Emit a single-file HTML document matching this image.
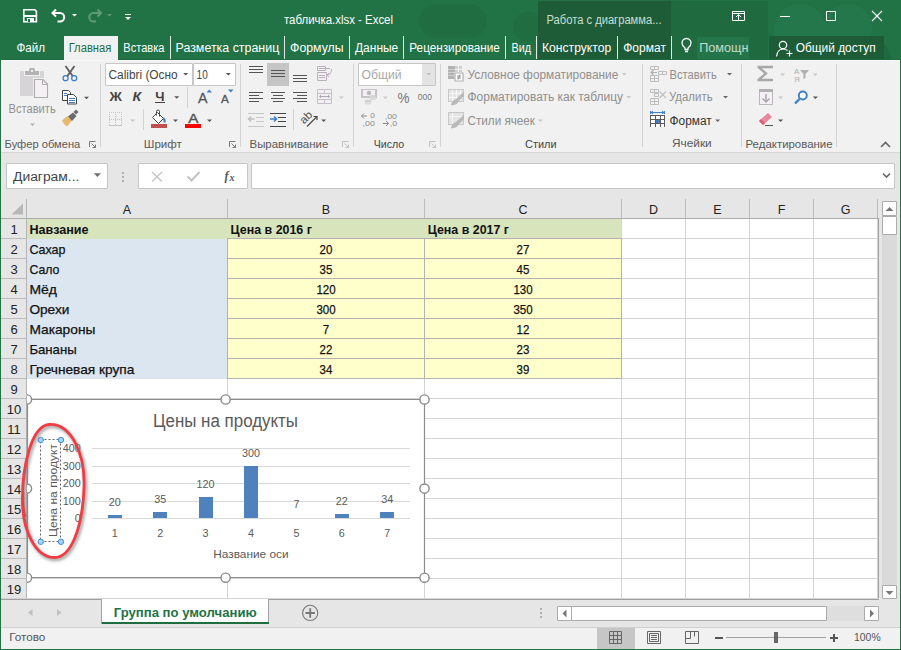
<!DOCTYPE html><html><head><meta charset="utf-8"><style>html,body{margin:0;padding:0;overflow:hidden;background:#fff}svg{display:block}text{white-space:pre}</style></head><body><svg width="901" height="650" viewBox="0 0 901 650"><rect x="0" y="0" width="901" height="650" fill="#ffffff" shape-rendering="crispEdges" />
<rect x="0" y="0" width="901" height="60" fill="#217346" shape-rendering="crispEdges" />
<rect x="419" y="4" width="68" height="34" fill="#206d42" shape-rendering="crispEdges" rx="17"/>
<circle cx="528" cy="27" r="15" fill="#206d42"/>
<g opacity="0.35"><circle cx="800" cy="30" r="26" fill="#2a8052"/><circle cx="848" cy="28" r="24" fill="#2a8052"/><circle cx="870" cy="62" r="22" fill="#1a5c37"/></g>
<rect x="671" y="1" width="97" height="59" fill="#1f6a3f" shape-rendering="crispEdges" />
<rect x="538" y="1" width="133" height="59" fill="#1e5b37" shape-rendering="crispEdges" />
<text x="546.5" y="24" font-size="12" fill="#c9dfcf" font-family="Liberation Sans" textLength="115" lengthAdjust="spacingAndGlyphs" >Работа с диаграмма...</text>
<path d="M23.8,9.8 h11 l1.6,1.6 v10.4 h-12.6 z" fill="none" stroke="#fff" stroke-width="1.6" />
<rect x="24" y="15" width="12" height="2" fill="#fff" shape-rendering="crispEdges" />
<rect x="27" y="18" width="7" height="4" fill="#fff" shape-rendering="crispEdges" />
<rect x="28" y="19" width="2" height="3" fill="#217346" shape-rendering="crispEdges" />
<path d="M56,9.5 l-3.5,3.5 l3.5,3.5 M53,13 h7 a4.2,4.2 0 0 1 0,8.4 h-2.5" fill="none" stroke="#fff" stroke-width="2" />
<path d="M72.0,14 L77.0,14 L74.5,16.5 Z" fill="#fff" />
<path d="M97.5,9.5 l3.5,3.5 l-3.5,3.5 M100.5,13 h-7 a4.2,4.2 0 0 0 0,8.4 h2.5" fill="none" stroke="#5e9c78" stroke-width="2" />
<path d="M107.0,14 L112.0,14 L109.5,16.5 Z" fill="#5e9c78" />
<rect x="125" y="14" width="6" height="1" fill="#fff" shape-rendering="crispEdges" />
<path d="M125.0,17 L131.0,17 L128,20.0 Z" fill="#fff" />
<text x="284" y="24" font-size="12.3" fill="#ffffff" font-family="Liberation Sans" textLength="109" lengthAdjust="spacingAndGlyphs" >табличка.xlsx - Excel</text>
<path d="M732.5,11.5 h12 v9 h-12 z M732.5,13.5 h12" fill="none" stroke="#fff" stroke-width="1" />
<path d="M738.5,20 v-5 M736,17 l2.5,-2.5 l2.5,2.5" fill="none" stroke="#fff" stroke-width="1" />
<rect x="780" y="16" width="10" height="1" fill="#fff" shape-rendering="crispEdges" />
<path d="M826.5,11.5 h9 v9 h-9 z" fill="none" stroke="#fff" stroke-width="1" />
<path d="M872,11 L882,21 M882,11 L872,21" fill="none" stroke="#fff" stroke-width="1.1" />
<rect x="64" y="36" width="54" height="24" fill="#f1f1f1" shape-rendering="crispEdges" />
<text x="16.5" y="51.8" font-size="12.5" fill="#fff" font-family="Liberation Sans" textLength="28.5" lengthAdjust="spacingAndGlyphs" >Файл</text>
<text x="68.7" y="51.8" font-size="12.5" fill="#1e6e40" font-family="Liberation Sans" textLength="42.6" lengthAdjust="spacingAndGlyphs" >Главная</text>
<text x="123.3" y="51.8" font-size="12.5" fill="#fff" font-family="Liberation Sans" textLength="41.1" lengthAdjust="spacingAndGlyphs" >Вставка</text>
<text x="175.5" y="51.8" font-size="12.5" fill="#fff" font-family="Liberation Sans" textLength="103.8" lengthAdjust="spacingAndGlyphs" >Разметка страниц</text>
<text x="290.1" y="51.8" font-size="12.5" fill="#fff" font-family="Liberation Sans" textLength="53.4" lengthAdjust="spacingAndGlyphs" >Формулы</text>
<text x="355" y="51.8" font-size="12.5" fill="#fff" font-family="Liberation Sans" textLength="43.3" lengthAdjust="spacingAndGlyphs" >Данные</text>
<text x="409.3" y="51.8" font-size="12.5" fill="#fff" font-family="Liberation Sans" textLength="90.6" lengthAdjust="spacingAndGlyphs" >Рецензирование</text>
<text x="511.5" y="51.8" font-size="12.5" fill="#fff" font-family="Liberation Sans" textLength="19.5" lengthAdjust="spacingAndGlyphs" >Вид</text>
<text x="542" y="51.8" font-size="12.5" fill="#fff" font-family="Liberation Sans" textLength="69.2" lengthAdjust="spacingAndGlyphs" >Конструктор</text>
<text x="623.2" y="51.8" font-size="12.5" fill="#fff" font-family="Liberation Sans" textLength="42.7" lengthAdjust="spacingAndGlyphs" >Формат</text>
<rect x="170" y="36" width="1" height="23" fill="#dfeae3" shape-rendering="crispEdges" />
<rect x="284" y="36" width="1" height="23" fill="#dfeae3" shape-rendering="crispEdges" />
<rect x="349" y="36" width="1" height="23" fill="#dfeae3" shape-rendering="crispEdges" />
<rect x="403" y="36" width="1" height="23" fill="#dfeae3" shape-rendering="crispEdges" />
<rect x="505" y="36" width="1" height="23" fill="#dfeae3" shape-rendering="crispEdges" />
<rect x="536" y="36" width="1" height="23" fill="#dfeae3" shape-rendering="crispEdges" />
<rect x="617" y="36" width="1" height="23" fill="#dfeae3" shape-rendering="crispEdges" />
<rect x="671" y="36" width="1" height="23" fill="#dfeae3" shape-rendering="crispEdges" />
<path d="M685,49.5 v-1.5 c-2,-1.5 -3,-3 -3,-5 a4.5,4.5 0 0 1 9,0 c0,2 -1,3.5 -3,5 v1.5 z M685,51.5 h3" fill="none" stroke="#fff" stroke-width="1.3" />
<rect x="697" y="37" width="52" height="22" fill="#247549" shape-rendering="crispEdges" />
<text x="699.2" y="51.8" font-size="12.5" fill="#c6dccd" font-family="Liberation Sans" textLength="49.2" lengthAdjust="spacingAndGlyphs" >Помощн</text>
<rect x="769" y="36" width="115" height="23" fill="#1d5c37" shape-rendering="crispEdges" />
<circle cx="783" cy="45" r="3.7" fill="none" stroke="#fff" stroke-width="1.2"/>
<path d="M776.5,56.5 C777,51.5 780,49 783,49 C785,49 786.5,49.6 787.5,50.5 M789.5,50.5 v6 M786.5,53.5 h6" fill="none" stroke="#fff" stroke-width="1.2" />
<text x="795.7" y="51.8" font-size="12.5" fill="#fff" font-family="Liberation Sans" textLength="80" lengthAdjust="spacingAndGlyphs" >Общий доступ</text>
<rect x="1" y="60" width="899" height="92" fill="#f1f1f1" shape-rendering="crispEdges" />
<rect x="1" y="59" width="63" height="1" fill="#1e6b40" shape-rendering="crispEdges" />
<rect x="118" y="59" width="782" height="1" fill="#1e6b40" shape-rendering="crispEdges" />
<rect x="1" y="60" width="899" height="1" fill="#f7f7f7" shape-rendering="crispEdges" />
<rect x="1" y="60" width="1" height="92" fill="#f7f7f7" shape-rendering="crispEdges" />
<rect x="1" y="152" width="899" height="1" fill="#d5d5d5" shape-rendering="crispEdges" />
<rect x="100" y="64" width="1" height="83" fill="#d2d2d2" shape-rendering="crispEdges" />
<rect x="240" y="64" width="1" height="83" fill="#d2d2d2" shape-rendering="crispEdges" />
<rect x="353" y="64" width="1" height="83" fill="#d2d2d2" shape-rendering="crispEdges" />
<rect x="440" y="64" width="1" height="83" fill="#d2d2d2" shape-rendering="crispEdges" />
<rect x="642" y="64" width="1" height="83" fill="#d2d2d2" shape-rendering="crispEdges" />
<rect x="741" y="64" width="1" height="83" fill="#d2d2d2" shape-rendering="crispEdges" />
<rect x="836" y="64" width="1" height="83" fill="#d2d2d2" shape-rendering="crispEdges" />
<rect x="20" y="71" width="24" height="25" fill="#d6d4d6" shape-rendering="crispEdges" />
<rect x="24" y="70" width="16" height="6" fill="#f1f1f1" shape-rendering="crispEdges" />
<rect x="25" y="71" width="14" height="4" fill="#b3b3b3" shape-rendering="crispEdges" />
<path d="M29,72 v-2.5 a1.5,1.5 0 0 1 1.5,-1.5 h3 a1.5,1.5 0 0 1 1.5,1.5 v2.5 z" fill="#b3b3b3" />
<rect x="31" y="70" width="2" height="2" fill="#f1f1f1" shape-rendering="crispEdges" />
<rect x="33" y="78" width="16" height="21" fill="#f1f1f1" shape-rendering="crispEdges" />
<path d="M34.5,79.5 h8.5 l4.5,4.5 v13.5 h-13 z" fill="#f4f0f4" stroke="#acacac" stroke-width="1.1" />
<path d="M42.5,79.5 v5 h5" fill="none" stroke="#acacac" stroke-width="1" />
<text x="8.5" y="112.6" font-size="12" fill="#919191" font-family="Liberation Sans" textLength="47.2" lengthAdjust="spacingAndGlyphs" >Вставить</text>
<path d="M30.0,123.5 L35.0,123.5 L32.5,126.0 Z" fill="#b0b0b0" />
<path d="M65.5,66 l7.5,10.5 M74.5,66 l-7.5,10.5" fill="none" stroke="#5f5f5f" stroke-width="1.9" />
<circle cx="65.6" cy="78.2" r="2.5" fill="#f1f1f1" stroke="#3f7fc4" stroke-width="1.3"/>
<circle cx="74.2" cy="78.2" r="2.5" fill="#f1f1f1" stroke="#3f7fc4" stroke-width="1.3"/>
<path d="M62.5,90.5 h6 l2,2 v8 h-8 z" fill="#fff" stroke="#444" stroke-width="1" />
<path d="M67.5,94.5 h6 l3,3 v6.5 h-9 z" fill="#fff" stroke="#444" stroke-width="1" />
<rect x="64" y="93" width="3" height="1" fill="#3f7fc4" shape-rendering="crispEdges" />
<rect x="64" y="95" width="3" height="1" fill="#3f7fc4" shape-rendering="crispEdges" />
<rect x="69" y="98" width="6" height="1" fill="#3f7fc4" shape-rendering="crispEdges" />
<rect x="69" y="100" width="6" height="1" fill="#3f7fc4" shape-rendering="crispEdges" />
<rect x="69" y="102" width="6" height="1" fill="#3f7fc4" shape-rendering="crispEdges" />
<path d="M84.0,96.8 L89.0,96.8 L86.5,99.3 Z" fill="#555" />
<path d="M62,120.5 L67.5,116 L72,120.5 L67,126.5 Q63.5,124.5 62,120.5 z" fill="#e6b96e" />
<path d="M68,116.5 L73,112.5 L76.5,116 L72,121 z" fill="#6a6a6a" />
<path d="M73.5,112 L76,109.5 L78.5,112 L76,114.5 z" fill="#6a6a6a" />
<text x="4.6" y="148" font-size="11" fill="#595959" font-family="Liberation Sans" textLength="75.7" lengthAdjust="spacingAndGlyphs" >Буфер обмена</text>
<path d="M89.5,147 v-5.5 h6" fill="none" stroke="#7a7a7a" stroke-width="1" />
<path d="M91.5,143.5 l4,4 M95.5,144.5 v3 h-3" fill="none" stroke="#7a7a7a" stroke-width="1" />
<rect x="105" y="63" width="88" height="23" fill="#fff" shape-rendering="crispEdges" />
<path d="M105.5,63.5 h87 v22 h-87 z" fill="none" stroke="#c6c6c6" stroke-width="1" />
<rect x="193" y="63" width="43" height="23" fill="#fff" shape-rendering="crispEdges" />
<path d="M193.5,63.5 h42 v22 h-42 z" fill="none" stroke="#c6c6c6" stroke-width="1" />
<text x="108.5" y="79" font-size="12" fill="#444444" font-family="Liberation Sans" textLength="69.2" lengthAdjust="spacingAndGlyphs" >Calibri (Осно</text>
<path d="M183.2,73 L188.2,73 L185.7,75.5 Z" fill="#555" />
<text x="196.6" y="79" font-size="12" fill="#444444" font-family="Liberation Sans" textLength="11.1" lengthAdjust="spacingAndGlyphs" >10</text>
<path d="M225.9,73 L230.9,73 L228.4,75.5 Z" fill="#555" />
<text x="109.6" y="100.7" font-size="12.5" fill="#444444" font-family="Liberation Sans" textLength="12.4" lengthAdjust="spacingAndGlyphs" font-weight="bold" >Ж</text>
<text x="132.5" y="100.7" font-size="12.5" fill="#444444" font-family="Liberation Sans" textLength="8.7" lengthAdjust="spacingAndGlyphs" font-weight="bold" font-style="italic">К</text>
<text x="155.2" y="100.7" font-size="12.5" fill="#444444" font-family="Liberation Sans" textLength="9.3" lengthAdjust="spacingAndGlyphs" font-weight="bold" >Ч</text>
<rect x="155" y="102" width="10" height="1" fill="#444444" shape-rendering="crispEdges" />
<path d="M174.2,96.2 L179.2,96.2 L176.7,98.7 Z" fill="#555" />
<rect x="187" y="87" width="1" height="21" fill="#d2d2d2" shape-rendering="crispEdges" />
<text x="198" y="103" font-size="14" fill="#555" font-family="Liberation Sans" textLength="9.5" lengthAdjust="spacingAndGlyphs" stroke="#555" stroke-width="0.3">A</text>
<path d="M206.5,92.5 l2.75,-3 l2.75,3 z" fill="#3f7fc4" />
<text x="221" y="103" font-size="11" fill="#555" font-family="Liberation Sans" textLength="7.8" lengthAdjust="spacingAndGlyphs" stroke="#555" stroke-width="0.3">A</text>
<path d="M228,89.5 h5.5 l-2.75,3 z" fill="#3f7fc4" />
<g fill="#c9c0cf"><rect x="109" y="112" width="1" height="1"/><rect x="109" y="119" width="1" height="1"/><rect x="111" y="112" width="1" height="1"/><rect x="111" y="119" width="1" height="1"/><rect x="113" y="112" width="1" height="1"/><rect x="113" y="119" width="1" height="1"/><rect x="115" y="112" width="1" height="1"/><rect x="115" y="119" width="1" height="1"/><rect x="117" y="112" width="1" height="1"/><rect x="117" y="119" width="1" height="1"/><rect x="119" y="112" width="1" height="1"/><rect x="119" y="119" width="1" height="1"/><rect x="121" y="112" width="1" height="1"/><rect x="121" y="119" width="1" height="1"/><rect x="109" y="112" width="1" height="1"/><rect x="115" y="112" width="1" height="1"/><rect x="121" y="112" width="1" height="1"/><rect x="109" y="114" width="1" height="1"/><rect x="115" y="114" width="1" height="1"/><rect x="121" y="114" width="1" height="1"/><rect x="109" y="116" width="1" height="1"/><rect x="115" y="116" width="1" height="1"/><rect x="121" y="116" width="1" height="1"/><rect x="109" y="118" width="1" height="1"/><rect x="115" y="118" width="1" height="1"/><rect x="121" y="118" width="1" height="1"/><rect x="109" y="120" width="1" height="1"/><rect x="115" y="120" width="1" height="1"/><rect x="121" y="120" width="1" height="1"/><rect x="109" y="122" width="1" height="1"/><rect x="115" y="122" width="1" height="1"/><rect x="121" y="122" width="1" height="1"/><rect x="109" y="124" width="1" height="1"/><rect x="115" y="124" width="1" height="1"/><rect x="121" y="124" width="1" height="1"/></g>
<rect x="109" y="125" width="13" height="1" fill="#c6c6c6" shape-rendering="crispEdges" />
<path d="M130.2,119.5 L135.2,119.5 L132.7,122.0 Z" fill="#c8c8c8" />
<rect x="143" y="109" width="1" height="21" fill="#d2d2d2" shape-rendering="crispEdges" />
<path d="M152.5,117.5 l5,-5 l6,6 l-5,5 z" fill="#fff" stroke="#444" stroke-width="1" />
<path d="M163,118 c1.5,1 2,3 1.2,4.5" fill="none" stroke="#3f7fc4" stroke-width="2" />
<path d="M156.5,115.5 v-4 a1.5,1.5 0 0 1 3,0 v5" fill="none" stroke="#444" stroke-width="1" />
<rect x="151" y="124" width="16" height="4" fill="#c0504d" shape-rendering="crispEdges" />
<path d="M173.0,119.5 L178.0,119.5 L175.5,122.0 Z" fill="#555" />
<text x="188.3" y="123.3" font-size="13.5" fill="#555" font-family="Liberation Sans" textLength="10.2" lengthAdjust="spacingAndGlyphs" stroke="#555" stroke-width="0.4">A</text>
<rect x="185" y="124" width="16" height="4" fill="#ff0000" shape-rendering="crispEdges" />
<path d="M207.0,119.5 L212.0,119.5 L209.5,122.0 Z" fill="#555" />
<text x="143.8" y="148" font-size="11" fill="#595959" font-family="Liberation Sans" textLength="38.1" lengthAdjust="spacingAndGlyphs" >Шрифт</text>
<path d="M229.5,147 v-5.5 h6" fill="none" stroke="#7a7a7a" stroke-width="1" />
<path d="M231.5,143.5 l4,4 M235.5,144.5 v3 h-3" fill="none" stroke="#7a7a7a" stroke-width="1" />
<rect x="249" y="66" width="14" height="1" fill="#555" shape-rendering="crispEdges" />
<rect x="249" y="69" width="14" height="1" fill="#555" shape-rendering="crispEdges" />
<rect x="249" y="72" width="14" height="1" fill="#555" shape-rendering="crispEdges" />
<rect x="267" y="63" width="22" height="23" fill="#c5c5c5" shape-rendering="crispEdges" />
<rect x="271" y="70" width="14" height="1" fill="#555" shape-rendering="crispEdges" />
<rect x="271" y="73" width="14" height="1" fill="#555" shape-rendering="crispEdges" />
<rect x="271" y="76" width="14" height="1" fill="#555" shape-rendering="crispEdges" />
<rect x="293" y="75" width="14" height="1" fill="#555" shape-rendering="crispEdges" />
<rect x="293" y="78" width="14" height="1" fill="#555" shape-rendering="crispEdges" />
<rect x="293" y="81" width="14" height="1" fill="#555" shape-rendering="crispEdges" />
<path d="M317.5,66.5 h8 v4 h-8 z M317.5,72.5 h9 v8 h-9 z M319,68.5 h11 M319,75.5 h6 M319,77.5 h6" fill="none" stroke="#b9b0bc" stroke-width="1" />
<path d="M331.5,69 Q331.5,75 327,75 M329,73 l-2,2 l2,2" fill="none" stroke="#b9b0bc" stroke-width="1" />
<rect x="249" y="92" width="14" height="1" fill="#555" shape-rendering="crispEdges" />
<rect x="249" y="95" width="10" height="1" fill="#555" shape-rendering="crispEdges" />
<rect x="249" y="98" width="14" height="1" fill="#555" shape-rendering="crispEdges" />
<rect x="249" y="101" width="10" height="1" fill="#555" shape-rendering="crispEdges" />
<rect x="271" y="92" width="14" height="1" fill="#555" shape-rendering="crispEdges" />
<rect x="271" y="98" width="14" height="1" fill="#555" shape-rendering="crispEdges" />
<rect x="273" y="95" width="10" height="1" fill="#555" shape-rendering="crispEdges" />
<rect x="273" y="101" width="10" height="1" fill="#555" shape-rendering="crispEdges" />
<rect x="293" y="92" width="14" height="1" fill="#555" shape-rendering="crispEdges" />
<rect x="293" y="98" width="14" height="1" fill="#555" shape-rendering="crispEdges" />
<rect x="297" y="95" width="10" height="1" fill="#555" shape-rendering="crispEdges" />
<rect x="297" y="101" width="10" height="1" fill="#555" shape-rendering="crispEdges" />
<path d="M317.5,89.5 h14 v14 h-14 z M317.5,93.5 h14 M317.5,99.5 h14 M324.5,89.5 v4 M324.5,99.5 v4" fill="none" stroke="#c8bccd" stroke-width="1" />
<path d="M320,96.5 h9 M321,95 l-1.5,1.5 l1.5,1.5 M328,95 l1.5,1.5 l-1.5,1.5" fill="none" stroke="#b0a6b6" stroke-width="1" />
<path d="M338.8,96.5 L343.8,96.5 L341.3,99.0 Z" fill="#c8c8c8" />
<rect x="248" y="113" width="16" height="1" fill="#c8c8c8" shape-rendering="crispEdges" />
<rect x="248" y="126" width="16" height="1" fill="#c8c8c8" shape-rendering="crispEdges" />
<rect x="256" y="117" width="8" height="1" fill="#c8c8c8" shape-rendering="crispEdges" />
<rect x="256" y="121" width="8" height="1" fill="#c8c8c8" shape-rendering="crispEdges" />
<path d="M248.5,119 h6 M251,116.5 l-2.5,2.5 l2.5,2.5" fill="none" stroke="#c0c0c0" stroke-width="1.5" />
<rect x="270" y="113" width="16" height="1" fill="#444" shape-rendering="crispEdges" />
<rect x="270" y="126" width="16" height="1" fill="#444" shape-rendering="crispEdges" />
<rect x="278" y="117" width="8" height="1" fill="#444" shape-rendering="crispEdges" />
<rect x="278" y="121" width="8" height="1" fill="#444" shape-rendering="crispEdges" />
<path d="M270,119 h6 M274,116.5 l2.5,2.5 l-2.5,2.5" fill="none" stroke="#3f7fc4" stroke-width="1.6" />
<rect x="293" y="109" width="1" height="21" fill="#d2d2d2" shape-rendering="crispEdges" />
<text x="0" y="0" font-size="11" fill="#4a4a4a" font-family="Liberation Sans" textLength="13" lengthAdjust="spacingAndGlyphs" transform="translate(304,124.5) rotate(-45)">ab</text>
<path d="M307,126.5 L317,116.5 M313.5,116.5 h3.5 v3.5" fill="none" stroke="#4a4a4a" stroke-width="1.2" />
<path d="M321.2,119.5 L326.2,119.5 L323.7,122.0 Z" fill="#555" />
<text x="249.5" y="148" font-size="11" fill="#595959" font-family="Liberation Sans" textLength="78.8" lengthAdjust="spacingAndGlyphs" >Выравнивание</text>
<path d="M342.5,147 v-5.5 h6" fill="none" stroke="#c0c0c0" stroke-width="1" />
<path d="M344.5,143.5 l4,4 M348.5,144.5 v3 h-3" fill="none" stroke="#c0c0c0" stroke-width="1" />
<rect x="358" y="63" width="78" height="23" fill="#fff" shape-rendering="crispEdges" />
<rect x="422" y="64" width="13" height="21" fill="#e3e3e3" shape-rendering="crispEdges" />
<path d="M358.5,63.5 h77 v22 h-77 z" fill="none" stroke="#c6c6c6" stroke-width="1" />
<text x="361.5" y="78.8" font-size="12" fill="#a8a8a8" font-family="Liberation Sans" textLength="40" lengthAdjust="spacingAndGlyphs" >Общий</text>
<path d="M426.2,73 L431.2,73 L428.7,75.5 Z" fill="#c0c0c0" />
<rect x="361" y="89" width="16" height="9" fill="#c4c4c4" shape-rendering="crispEdges" />
<rect x="363" y="90" width="12" height="6" fill="#f4eff4" shape-rendering="crispEdges" />
<circle cx="369" cy="93" r="2.2" fill="#b8b8b8"/>
<ellipse cx="373" cy="96.5" rx="3.6" ry="1.6" fill="#d2d2d2"/><ellipse cx="373" cy="98.8" rx="3.6" ry="1.3" fill="#dcdcdc"/>
<ellipse cx="368" cy="101" rx="3.6" ry="1.6" fill="#d2d2d2"/><ellipse cx="368" cy="103.3" rx="3.6" ry="1.3" fill="#dcdcdc"/>
<path d="M382.8,96.5 L387.8,96.5 L385.3,99.0 Z" fill="#c8c8c8" />
<text x="397.6" y="102.8" font-size="14" fill="#777" font-family="Liberation Sans" textLength="12" lengthAdjust="spacingAndGlyphs" >%</text>
<text x="417.7" y="100.2" font-size="9.5" fill="#777" font-family="Liberation Sans" textLength="14.2" lengthAdjust="spacingAndGlyphs" >000</text>
<text x="370.3" y="118.4" font-size="7.5" fill="#8a8a8a" font-family="Liberation Sans" textLength="4.6" lengthAdjust="spacingAndGlyphs" >0</text>
<text x="362.6" y="126.3" font-size="7.5" fill="#8a8a8a" font-family="Liberation Sans" textLength="12.2" lengthAdjust="spacingAndGlyphs" >,00</text>
<path d="M361.5,116 h5.5 M364,113.5 l-2.5,2.5 l2.5,2.5" fill="none" stroke="#8a8a8a" stroke-width="1" />
<text x="384.8" y="118.5" font-size="7.5" fill="#8a8a8a" font-family="Liberation Sans" textLength="12.2" lengthAdjust="spacingAndGlyphs" >,00</text>
<text x="389.8" y="126.3" font-size="7.5" fill="#8a8a8a" font-family="Liberation Sans" textLength="7.4" lengthAdjust="spacingAndGlyphs" >,0</text>
<path d="M383,123.5 h5.5 M386,121 l2.5,2.5 l-2.5,2.5" fill="none" stroke="#8a8a8a" stroke-width="1" />
<text x="373.8" y="148" font-size="11" fill="#444" font-family="Liberation Sans" textLength="30.4" lengthAdjust="spacingAndGlyphs" >Число</text>
<path d="M429.5,147 v-5.5 h6" fill="none" stroke="#c0c0c0" stroke-width="1" />
<path d="M431.5,143.5 l4,4 M435.5,144.5 v3 h-3" fill="none" stroke="#c0c0c0" stroke-width="1" />
<rect x="448" y="66" width="14" height="13" fill="#d0d0d0" shape-rendering="crispEdges" />
<rect x="448" y="66" width="7" height="13" fill="#b3b3b3" shape-rendering="crispEdges" />
<rect x="448" y="69" width="7" height="1" fill="#cfcfcf" shape-rendering="crispEdges" />
<rect x="448" y="72" width="7" height="1" fill="#cfcfcf" shape-rendering="crispEdges" />
<rect x="448" y="75" width="7" height="1" fill="#cfcfcf" shape-rendering="crispEdges" />
<rect x="455" y="69" width="7" height="1" fill="#f1f1f1" shape-rendering="crispEdges" />
<rect x="455" y="72" width="7" height="1" fill="#f1f1f1" shape-rendering="crispEdges" />
<rect x="455" y="75" width="7" height="1" fill="#f1f1f1" shape-rendering="crispEdges" />
<rect x="458" y="66" width="1" height="13" fill="#f1f1f1" shape-rendering="crispEdges" />
<rect x="454" y="72" width="10" height="10" fill="#f1f1f1" shape-rendering="crispEdges" />
<path d="M455,73 h8 v8 h-8 z" fill="#fff" stroke="#b0b0b0" stroke-width="1.2" />
<path d="M457,76 h4 M457,78 h4 M460,74.5 l-2,5" fill="none" stroke="#888" stroke-width="0.9" />
<rect x="448" y="89" width="16" height="13" fill="#c8c8c8" shape-rendering="crispEdges" />
<rect x="449" y="90" width="14" height="11" fill="#e4e4e4" shape-rendering="crispEdges" />
<rect x="452" y="90" width="1" height="11" fill="#f8f8f8" shape-rendering="crispEdges" />
<rect x="456" y="90" width="1" height="11" fill="#f8f8f8" shape-rendering="crispEdges" />
<rect x="460" y="90" width="1" height="11" fill="#f8f8f8" shape-rendering="crispEdges" />
<rect x="449" y="93" width="14" height="1" fill="#f8f8f8" shape-rendering="crispEdges" />
<rect x="449" y="97" width="14" height="1" fill="#f8f8f8" shape-rendering="crispEdges" />
<path d="M451,105.5 Q451.5,100.5 455.5,99.5 L464,91.5 V96 L458.5,101.5 Q457.5,105 451,105.5 Z" fill="#b9b9b9" />
<text x="467.5" y="78.8" font-size="12" fill="#8f8f8f" font-family="Liberation Sans" textLength="150.8" lengthAdjust="spacingAndGlyphs" >Условное форматирование</text>
<path d="M621.7,73 L626.7,73 L624.2,75.5 Z" fill="#c8c8c8" />
<text x="467.5" y="101.4" font-size="12" fill="#8f8f8f" font-family="Liberation Sans" textLength="155.5" lengthAdjust="spacingAndGlyphs" >Форматировать как таблицу</text>
<path d="M626.2,96 L631.2,96 L628.7,98.5 Z" fill="#c8c8c8" />
<rect x="448" y="112" width="16" height="13" fill="#c8c8c8" shape-rendering="crispEdges" />
<rect x="449" y="113" width="14" height="11" fill="#e4e4e4" shape-rendering="crispEdges" />
<rect x="452" y="113" width="1" height="11" fill="#f8f8f8" shape-rendering="crispEdges" />
<rect x="449" y="116" width="14" height="1" fill="#f8f8f8" shape-rendering="crispEdges" />
<path d="M451,128.5 Q451.5,123.5 455.5,122.5 L464,114.5 V119 L458.5,124.5 Q457.5,128 451,128.5 Z" fill="#b9b9b9" />
<text x="467.5" y="125" font-size="12" fill="#8f8f8f" font-family="Liberation Sans" textLength="67.5" lengthAdjust="spacingAndGlyphs" >Стили ячеек</text>
<path d="M537.8,119.5 L542.8,119.5 L540.3,122.0 Z" fill="#c8c8c8" />
<text x="525" y="148" font-size="11" fill="#444" font-family="Liberation Sans" textLength="31.5" lengthAdjust="spacingAndGlyphs" >Стили</text>
<path d="M650.5,66.5 h4 v3 h-4 z" fill="none" stroke="#bdbdbd" stroke-width="1" />
<path d="M654.5,66.5 h4 v3 h-4 z" fill="none" stroke="#bdbdbd" stroke-width="1" />
<path d="M658.5,71.5 h4 v3 h-4 z" fill="none" stroke="#bdbdbd" stroke-width="1" />
<path d="M662.5,71.5 h4 v3 h-4 z" fill="none" stroke="#bdbdbd" stroke-width="1" />
<path d="M651,72.5 h6 M653.5,70 l-2.5,2.5 l2.5,2.5" fill="none" stroke="#b0b0b0" stroke-width="1.2" />
<path d="M650.5,75.5 h4 v3 h-4 z" fill="none" stroke="#bdbdbd" stroke-width="1" />
<path d="M654.5,75.5 h4 v3 h-4 z" fill="none" stroke="#bdbdbd" stroke-width="1" />
<path d="M650.5,78.5 h4 v3 h-4 z" fill="none" stroke="#bdbdbd" stroke-width="1" />
<path d="M654.5,78.5 h4 v3 h-4 z" fill="none" stroke="#bdbdbd" stroke-width="1" />
<text x="669.5" y="78.8" font-size="12" fill="#8f8f8f" font-family="Liberation Sans" textLength="47.3" lengthAdjust="spacingAndGlyphs" >Вставить</text>
<path d="M727.0,73 L732.0,73 L729.5,75.5 Z" fill="#666" />
<path d="M650.5,89.5 h4 v3 h-4 z" fill="none" stroke="#bdbdbd" stroke-width="1" />
<path d="M654.5,89.5 h4 v3 h-4 z" fill="none" stroke="#bdbdbd" stroke-width="1" />
<path d="M654.5,93.5 h4 v3 h-4 z" fill="none" stroke="#bdbdbd" stroke-width="1" />
<path d="M650.5,98.5 h4 v3 h-4 z" fill="none" stroke="#bdbdbd" stroke-width="1" />
<path d="M654.5,98.5 h4 v3 h-4 z" fill="none" stroke="#bdbdbd" stroke-width="1" />
<path d="M650.5,101.5 h4 v3 h-4 z" fill="none" stroke="#bdbdbd" stroke-width="1" />
<path d="M654.5,101.5 h4 v3 h-4 z" fill="none" stroke="#bdbdbd" stroke-width="1" />
<path d="M659.5,91.5 l6.5,6.5 M666,91.5 l-6.5,6.5" fill="none" stroke="#c0c0c0" stroke-width="1.2" />
<text x="669" y="101.4" font-size="12" fill="#8f8f8f" font-family="Liberation Sans" textLength="43.6" lengthAdjust="spacingAndGlyphs" >Удалить</text>
<path d="M723.0,96 L728.0,96 L725.5,98.5 Z" fill="#666" />
<rect x="650" y="115" width="15" height="12" fill="#5a5a5a" shape-rendering="crispEdges" />
<rect x="651" y="116" width="4" height="3" fill="#fff" shape-rendering="crispEdges" />
<rect x="656" y="116" width="4" height="3" fill="#fff" shape-rendering="crispEdges" />
<rect x="661" y="116" width="3" height="3" fill="#fff" shape-rendering="crispEdges" />
<rect x="651" y="120" width="4" height="3" fill="#fff" shape-rendering="crispEdges" />
<rect x="661" y="120" width="3" height="3" fill="#fff" shape-rendering="crispEdges" />
<rect x="651" y="124" width="4" height="3" fill="#fff" shape-rendering="crispEdges" />
<rect x="656" y="124" width="4" height="3" fill="#fff" shape-rendering="crispEdges" />
<rect x="661" y="124" width="3" height="3" fill="#fff" shape-rendering="crispEdges" />
<rect x="656" y="120" width="4" height="3" fill="#3f7fc4" shape-rendering="crispEdges" />
<path d="M651,112.5 h13 M650.5,111 v3 M664.5,111 v3 M653,111 l-2,1.5 l2,1.5 M662,111 l2,1.5 l-2,1.5" fill="none" stroke="#3f7fc4" stroke-width="1" />
<text x="669.5" y="125" font-size="12" fill="#333" font-family="Liberation Sans" textLength="42.2" lengthAdjust="spacingAndGlyphs" >Формат</text>
<path d="M715.2,119.5 L720.2,119.5 L717.7,122.0 Z" fill="#666" />
<text x="672" y="147.2" font-size="11" fill="#595959" font-family="Liberation Sans" textLength="39.7" lengthAdjust="spacingAndGlyphs" >Ячейки</text>
<path d="M757.5,67 h15.5 M759,67.5 L766,73.5 L759,79.5 M757.5,80 h15.5" fill="none" stroke="#a8a8a8" stroke-width="2.4" />
<path d="M780.1,73.5 L785.1,73.5 L782.6,76.0 Z" fill="#c8c8c8" />
<text x="794" y="73.5" font-size="8" fill="#b0b0b0" font-family="Liberation Sans" >А</text>
<text x="794" y="81.8" font-size="8" fill="#b0b0b0" font-family="Liberation Sans" >Я</text>
<path d="M800,70 h9 l-3.5,4 v4 l-2,1 v-5 z" fill="#b0b0b0" />
<path d="M812.8,73.5 L817.8,73.5 L815.3,76.0 Z" fill="#c8c8c8" />
<rect x="759" y="89" width="14" height="16" fill="#b8b8b8" shape-rendering="crispEdges" />
<rect x="760" y="92" width="12" height="12" fill="#f4eff4" shape-rendering="crispEdges" />
<rect x="759" y="89" width="14" height="3" fill="#b0b0b0" shape-rendering="crispEdges" />
<path d="M766,94 v8 M762.5,98.5 l3.5,3.5 l3.5,-3.5" fill="none" stroke="#a8a8a8" stroke-width="1.5" />
<path d="M778.1,96.5 L783.1,96.5 L780.6,99.0 Z" fill="#c8c8c8" />
<circle cx="802.8" cy="95.5" r="4" fill="#fff" stroke="#3f7fc4" stroke-width="1.9"/>
<path d="M799.5,99 l-4.5,4.5" fill="none" stroke="#3f7fc4" stroke-width="2.4" />
<path d="M812.9,96.5 L817.9,96.5 L815.4,99.0 Z" fill="#555" />
<path d="M759,121 L768,113 L772,117 L763,125 z" fill="#e8899a" />
<path d="M759,121 L761,119 L765,123 L763,125 z" fill="#dd5f74" />
<rect x="765" y="125" width="8" height="1" fill="#555" shape-rendering="crispEdges" />
<path d="M778.1,119.5 L783.1,119.5 L780.6,122.0 Z" fill="#555" />
<text x="745.5" y="148" font-size="11" fill="#595959" font-family="Liberation Sans" textLength="87.1" lengthAdjust="spacingAndGlyphs" >Редактирование</text>
<path d="M881,147 l4.5,-4.5 l4.5,4.5" fill="none" stroke="#666" stroke-width="1.6" />
<rect x="1" y="153" width="899" height="46" fill="#e6e6e6" shape-rendering="crispEdges" />
<rect x="6" y="163" width="102" height="26" fill="#fff" shape-rendering="crispEdges" />
<path d="M6.5,163.5 h101 v25 h-101 z" fill="none" stroke="#c6c6c6" stroke-width="1" />
<text x="13" y="180.9" font-size="12" fill="#444" font-family="Liberation Sans" textLength="66.4" lengthAdjust="spacingAndGlyphs" >Диаграм...</text>
<path d="M93.80000000000001,173.3 L101.0,173.3 L97.4,176.9 Z" fill="#6d6d6d" />
<rect x="122" y="172" width="2" height="2" fill="#b0b0b0" shape-rendering="crispEdges" />
<rect x="122" y="176" width="2" height="2" fill="#b0b0b0" shape-rendering="crispEdges" />
<rect x="122" y="180" width="2" height="2" fill="#b0b0b0" shape-rendering="crispEdges" />
<rect x="138" y="163" width="110" height="26" fill="#fff" shape-rendering="crispEdges" />
<path d="M138.5,163.5 h109 v25 h-109 z" fill="none" stroke="#c6c6c6" stroke-width="1" />
<path d="M152,172 l10,9.5 M162,172 l-10,9.5" fill="none" stroke="#c3c3c3" stroke-width="1.3" />
<path d="M187.5,176.5 l4,4 l8,-8.5" fill="none" stroke="#c3c3c3" stroke-width="2" />
<text x="224.4" y="180" font-size="12" fill="#555" font-family="Liberation Serif" font-weight="bold" font-style="italic">f</text>
<text x="229.5" y="181" font-size="10" fill="#555" font-family="Liberation Serif" font-weight="bold" font-style="italic">x</text>
<rect x="251" y="163" width="644" height="26" fill="#fff" shape-rendering="crispEdges" />
<path d="M251.5,163.5 h643 v25 h-643 z" fill="none" stroke="#c6c6c6" stroke-width="1" />
<path d="M883,173.5 l3.5,3.5 l3.5,-3.5" fill="none" stroke="#666" stroke-width="1.6" />
<rect x="1" y="199" width="877" height="19" fill="#e6e6e6" shape-rendering="crispEdges" />
<path d="M11.5,214.5 L23,203.5 L23,214.5 Z" fill="#b8b8b8" />
<rect x="26" y="199" width="1" height="19" fill="#bcbcbc" shape-rendering="crispEdges" />
<rect x="227" y="199" width="1" height="19" fill="#bcbcbc" shape-rendering="crispEdges" />
<rect x="424" y="199" width="1" height="19" fill="#bcbcbc" shape-rendering="crispEdges" />
<rect x="621" y="199" width="1" height="19" fill="#bcbcbc" shape-rendering="crispEdges" />
<rect x="685" y="199" width="1" height="19" fill="#bcbcbc" shape-rendering="crispEdges" />
<rect x="749" y="199" width="1" height="19" fill="#bcbcbc" shape-rendering="crispEdges" />
<rect x="813" y="199" width="1" height="19" fill="#bcbcbc" shape-rendering="crispEdges" />
<rect x="877" y="199" width="1" height="19" fill="#bcbcbc" shape-rendering="crispEdges" />
<rect x="1" y="218" width="877" height="1" fill="#ababab" shape-rendering="crispEdges" />
<text x="127.0" y="213.6" font-size="12.5" fill="#222" font-family="Liberation Sans" text-anchor="middle" >A</text>
<text x="326.0" y="213.6" font-size="12.5" fill="#222" font-family="Liberation Sans" text-anchor="middle" >B</text>
<text x="523.0" y="213.6" font-size="12.5" fill="#222" font-family="Liberation Sans" text-anchor="middle" >C</text>
<text x="653.5" y="213.6" font-size="12.5" fill="#222" font-family="Liberation Sans" text-anchor="middle" >D</text>
<text x="717.5" y="213.6" font-size="12.5" fill="#222" font-family="Liberation Sans" text-anchor="middle" >E</text>
<text x="781.5" y="213.6" font-size="12.5" fill="#222" font-family="Liberation Sans" text-anchor="middle" >F</text>
<text x="845.5" y="213.6" font-size="12.5" fill="#222" font-family="Liberation Sans" text-anchor="middle" >G</text>
<rect x="878" y="199" width="22" height="400" fill="#e6e6e6" shape-rendering="crispEdges" />
<rect x="882" y="235" width="15" height="350" fill="#dadada" shape-rendering="crispEdges" />
<rect x="882" y="201" width="15" height="15" fill="#fff" shape-rendering="crispEdges" />
<path d="M882.5,201.5 h14 v14 h-14 z" fill="none" stroke="#ababab" stroke-width="1" />
<path d="M885.5,211 h8 l-4,-4 z" fill="#777" />
<rect x="882" y="216" width="15" height="19" fill="#fff" shape-rendering="crispEdges" />
<path d="M882.5,216.5 h14 v18 h-14 z" fill="none" stroke="#ababab" stroke-width="1" />
<rect x="882" y="585" width="15" height="14" fill="#fff" shape-rendering="crispEdges" />
<path d="M882.5,585.5 h14 v13 h-14 z" fill="none" stroke="#ababab" stroke-width="1" />
<path d="M885.5,591 h8 l-4,4 z" fill="#777" />
<rect x="27" y="219" width="851" height="380" fill="#fff" shape-rendering="crispEdges" />
<rect x="27" y="238" width="851" height="1" fill="#d4d4d4" shape-rendering="crispEdges" />
<rect x="27" y="258" width="851" height="1" fill="#d4d4d4" shape-rendering="crispEdges" />
<rect x="27" y="278" width="851" height="1" fill="#d4d4d4" shape-rendering="crispEdges" />
<rect x="27" y="298" width="851" height="1" fill="#d4d4d4" shape-rendering="crispEdges" />
<rect x="27" y="318" width="851" height="1" fill="#d4d4d4" shape-rendering="crispEdges" />
<rect x="27" y="338" width="851" height="1" fill="#d4d4d4" shape-rendering="crispEdges" />
<rect x="27" y="358" width="851" height="1" fill="#d4d4d4" shape-rendering="crispEdges" />
<rect x="27" y="378" width="851" height="1" fill="#d4d4d4" shape-rendering="crispEdges" />
<rect x="27" y="398" width="851" height="1" fill="#d4d4d4" shape-rendering="crispEdges" />
<rect x="27" y="418" width="851" height="1" fill="#d4d4d4" shape-rendering="crispEdges" />
<rect x="27" y="438" width="851" height="1" fill="#d4d4d4" shape-rendering="crispEdges" />
<rect x="27" y="458" width="851" height="1" fill="#d4d4d4" shape-rendering="crispEdges" />
<rect x="27" y="478" width="851" height="1" fill="#d4d4d4" shape-rendering="crispEdges" />
<rect x="27" y="498" width="851" height="1" fill="#d4d4d4" shape-rendering="crispEdges" />
<rect x="27" y="518" width="851" height="1" fill="#d4d4d4" shape-rendering="crispEdges" />
<rect x="27" y="538" width="851" height="1" fill="#d4d4d4" shape-rendering="crispEdges" />
<rect x="27" y="558" width="851" height="1" fill="#d4d4d4" shape-rendering="crispEdges" />
<rect x="27" y="578" width="851" height="1" fill="#d4d4d4" shape-rendering="crispEdges" />
<rect x="27" y="598" width="851" height="1" fill="#d4d4d4" shape-rendering="crispEdges" />
<rect x="227" y="219" width="1" height="379" fill="#d4d4d4" shape-rendering="crispEdges" />
<rect x="424" y="219" width="1" height="379" fill="#d4d4d4" shape-rendering="crispEdges" />
<rect x="621" y="219" width="1" height="379" fill="#d4d4d4" shape-rendering="crispEdges" />
<rect x="685" y="219" width="1" height="379" fill="#d4d4d4" shape-rendering="crispEdges" />
<rect x="749" y="219" width="1" height="379" fill="#d4d4d4" shape-rendering="crispEdges" />
<rect x="813" y="219" width="1" height="379" fill="#d4d4d4" shape-rendering="crispEdges" />
<rect x="877" y="219" width="1" height="379" fill="#d4d4d4" shape-rendering="crispEdges" />
<rect x="878" y="218" width="1" height="381" fill="#a0a0a0" shape-rendering="crispEdges" />
<rect x="1" y="219" width="25" height="380" fill="#e6e6e6" shape-rendering="crispEdges" />
<rect x="26" y="199" width="1" height="400" fill="#b4b4b4" shape-rendering="crispEdges" />
<rect x="1" y="238" width="25" height="1" fill="#bcbcbc" shape-rendering="crispEdges" />
<text x="14" y="233.5" font-size="13" fill="#222" font-family="Liberation Sans" text-anchor="middle" >1</text>
<rect x="1" y="258" width="25" height="1" fill="#bcbcbc" shape-rendering="crispEdges" />
<text x="14" y="253.5" font-size="13" fill="#222" font-family="Liberation Sans" text-anchor="middle" >2</text>
<rect x="1" y="278" width="25" height="1" fill="#bcbcbc" shape-rendering="crispEdges" />
<text x="14" y="273.5" font-size="13" fill="#222" font-family="Liberation Sans" text-anchor="middle" >3</text>
<rect x="1" y="298" width="25" height="1" fill="#bcbcbc" shape-rendering="crispEdges" />
<text x="14" y="293.5" font-size="13" fill="#222" font-family="Liberation Sans" text-anchor="middle" >4</text>
<rect x="1" y="318" width="25" height="1" fill="#bcbcbc" shape-rendering="crispEdges" />
<text x="14" y="313.5" font-size="13" fill="#222" font-family="Liberation Sans" text-anchor="middle" >5</text>
<rect x="1" y="338" width="25" height="1" fill="#bcbcbc" shape-rendering="crispEdges" />
<text x="14" y="333.5" font-size="13" fill="#222" font-family="Liberation Sans" text-anchor="middle" >6</text>
<rect x="1" y="358" width="25" height="1" fill="#bcbcbc" shape-rendering="crispEdges" />
<text x="14" y="353.5" font-size="13" fill="#222" font-family="Liberation Sans" text-anchor="middle" >7</text>
<rect x="1" y="378" width="25" height="1" fill="#bcbcbc" shape-rendering="crispEdges" />
<text x="14" y="373.5" font-size="13" fill="#222" font-family="Liberation Sans" text-anchor="middle" >8</text>
<rect x="1" y="398" width="25" height="1" fill="#bcbcbc" shape-rendering="crispEdges" />
<text x="14" y="393.5" font-size="13" fill="#222" font-family="Liberation Sans" text-anchor="middle" >9</text>
<rect x="1" y="418" width="25" height="1" fill="#bcbcbc" shape-rendering="crispEdges" />
<text x="14" y="413.5" font-size="13" fill="#222" font-family="Liberation Sans" text-anchor="middle" >10</text>
<rect x="1" y="438" width="25" height="1" fill="#bcbcbc" shape-rendering="crispEdges" />
<text x="14" y="433.5" font-size="13" fill="#222" font-family="Liberation Sans" text-anchor="middle" >11</text>
<rect x="1" y="458" width="25" height="1" fill="#bcbcbc" shape-rendering="crispEdges" />
<text x="14" y="453.5" font-size="13" fill="#222" font-family="Liberation Sans" text-anchor="middle" >12</text>
<rect x="1" y="478" width="25" height="1" fill="#bcbcbc" shape-rendering="crispEdges" />
<text x="14" y="473.5" font-size="13" fill="#222" font-family="Liberation Sans" text-anchor="middle" >13</text>
<rect x="1" y="498" width="25" height="1" fill="#bcbcbc" shape-rendering="crispEdges" />
<text x="14" y="493.5" font-size="13" fill="#222" font-family="Liberation Sans" text-anchor="middle" >14</text>
<rect x="1" y="518" width="25" height="1" fill="#bcbcbc" shape-rendering="crispEdges" />
<text x="14" y="513.5" font-size="13" fill="#222" font-family="Liberation Sans" text-anchor="middle" >15</text>
<rect x="1" y="538" width="25" height="1" fill="#bcbcbc" shape-rendering="crispEdges" />
<text x="14" y="533.5" font-size="13" fill="#222" font-family="Liberation Sans" text-anchor="middle" >16</text>
<rect x="1" y="558" width="25" height="1" fill="#bcbcbc" shape-rendering="crispEdges" />
<text x="14" y="553.5" font-size="13" fill="#222" font-family="Liberation Sans" text-anchor="middle" >17</text>
<rect x="1" y="578" width="25" height="1" fill="#bcbcbc" shape-rendering="crispEdges" />
<text x="14" y="573.5" font-size="13" fill="#222" font-family="Liberation Sans" text-anchor="middle" >18</text>
<rect x="1" y="598" width="25" height="1" fill="#bcbcbc" shape-rendering="crispEdges" />
<text x="14" y="593.5" font-size="13" fill="#222" font-family="Liberation Sans" text-anchor="middle" >19</text>
<rect x="27" y="219" width="594" height="20" fill="#d8e4bc" shape-rendering="crispEdges" />
<rect x="27" y="239" width="200" height="140" fill="#dce6f1" shape-rendering="crispEdges" />
<rect x="228" y="239" width="196" height="139" fill="#ffffcc" shape-rendering="crispEdges" />
<rect x="425" y="239" width="196" height="139" fill="#ffffcc" shape-rendering="crispEdges" />
<rect x="227" y="238" width="395" height="1" fill="#b2b2b2" shape-rendering="crispEdges" />
<rect x="227" y="258" width="395" height="1" fill="#b2b2b2" shape-rendering="crispEdges" />
<rect x="227" y="278" width="395" height="1" fill="#b2b2b2" shape-rendering="crispEdges" />
<rect x="227" y="298" width="395" height="1" fill="#b2b2b2" shape-rendering="crispEdges" />
<rect x="227" y="318" width="395" height="1" fill="#b2b2b2" shape-rendering="crispEdges" />
<rect x="227" y="338" width="395" height="1" fill="#b2b2b2" shape-rendering="crispEdges" />
<rect x="227" y="358" width="395" height="1" fill="#b2b2b2" shape-rendering="crispEdges" />
<rect x="227" y="378" width="395" height="1" fill="#b2b2b2" shape-rendering="crispEdges" />
<rect x="227" y="378" width="395" height="1" fill="#b2b2b2" shape-rendering="crispEdges" />
<rect x="227" y="238" width="1" height="141" fill="#b2b2b2" shape-rendering="crispEdges" />
<rect x="424" y="238" width="1" height="141" fill="#b2b2b2" shape-rendering="crispEdges" />
<rect x="621" y="238" width="1" height="141" fill="#b2b2b2" shape-rendering="crispEdges" />
<text x="29.4" y="233.5" font-size="13.4" fill="#111" font-family="Liberation Sans" textLength="59.2" lengthAdjust="spacingAndGlyphs" font-weight="bold" >Навзание</text>
<text x="230.6" y="233.5" font-size="13.4" fill="#111" font-family="Liberation Sans" textLength="81.3" lengthAdjust="spacingAndGlyphs" font-weight="bold" >Цена в 2016 г</text>
<text x="427.7" y="233.5" font-size="13.4" fill="#111" font-family="Liberation Sans" textLength="81.3" lengthAdjust="spacingAndGlyphs" font-weight="bold" >Цена в 2017 г</text>
<text x="29.4" y="253.5" font-size="13.4" fill="#111" font-family="Liberation Sans" textLength="36.1" lengthAdjust="spacingAndGlyphs" stroke="#111" stroke-width="0.25">Сахар</text>
<text x="326" y="253.5" font-size="13.4" fill="#111" font-family="Liberation Sans" textLength="12.8" lengthAdjust="spacingAndGlyphs" text-anchor="middle" stroke="#111" stroke-width="0.25">20</text>
<text x="523" y="253.5" font-size="13.4" fill="#111" font-family="Liberation Sans" textLength="12.8" lengthAdjust="spacingAndGlyphs" text-anchor="middle" stroke="#111" stroke-width="0.25">27</text>
<text x="29.4" y="273.5" font-size="13.4" fill="#111" font-family="Liberation Sans" textLength="30" lengthAdjust="spacingAndGlyphs" stroke="#111" stroke-width="0.25">Сало</text>
<text x="326" y="273.5" font-size="13.4" fill="#111" font-family="Liberation Sans" textLength="12.8" lengthAdjust="spacingAndGlyphs" text-anchor="middle" stroke="#111" stroke-width="0.25">35</text>
<text x="523" y="273.5" font-size="13.4" fill="#111" font-family="Liberation Sans" textLength="12.8" lengthAdjust="spacingAndGlyphs" text-anchor="middle" stroke="#111" stroke-width="0.25">45</text>
<text x="29.4" y="293.5" font-size="13.4" fill="#111" font-family="Liberation Sans" textLength="27.5" lengthAdjust="spacingAndGlyphs" stroke="#111" stroke-width="0.25">Мёд</text>
<text x="326" y="293.5" font-size="13.4" fill="#111" font-family="Liberation Sans" textLength="19.200000000000003" lengthAdjust="spacingAndGlyphs" text-anchor="middle" stroke="#111" stroke-width="0.25">120</text>
<text x="523" y="293.5" font-size="13.4" fill="#111" font-family="Liberation Sans" textLength="19.200000000000003" lengthAdjust="spacingAndGlyphs" text-anchor="middle" stroke="#111" stroke-width="0.25">130</text>
<text x="29.4" y="313.5" font-size="13.4" fill="#111" font-family="Liberation Sans" textLength="40" lengthAdjust="spacingAndGlyphs" stroke="#111" stroke-width="0.25">Орехи</text>
<text x="326" y="313.5" font-size="13.4" fill="#111" font-family="Liberation Sans" textLength="19.200000000000003" lengthAdjust="spacingAndGlyphs" text-anchor="middle" stroke="#111" stroke-width="0.25">300</text>
<text x="523" y="313.5" font-size="13.4" fill="#111" font-family="Liberation Sans" textLength="19.200000000000003" lengthAdjust="spacingAndGlyphs" text-anchor="middle" stroke="#111" stroke-width="0.25">350</text>
<text x="29.4" y="333.5" font-size="13.4" fill="#111" font-family="Liberation Sans" textLength="66" lengthAdjust="spacingAndGlyphs" stroke="#111" stroke-width="0.25">Макароны</text>
<text x="326" y="333.5" font-size="13.4" fill="#111" font-family="Liberation Sans" textLength="6.4" lengthAdjust="spacingAndGlyphs" text-anchor="middle" stroke="#111" stroke-width="0.25">7</text>
<text x="523" y="333.5" font-size="13.4" fill="#111" font-family="Liberation Sans" textLength="12.8" lengthAdjust="spacingAndGlyphs" text-anchor="middle" stroke="#111" stroke-width="0.25">12</text>
<text x="29.4" y="353.5" font-size="13.4" fill="#111" font-family="Liberation Sans" textLength="47.3" lengthAdjust="spacingAndGlyphs" stroke="#111" stroke-width="0.25">Бананы</text>
<text x="326" y="353.5" font-size="13.4" fill="#111" font-family="Liberation Sans" textLength="12.8" lengthAdjust="spacingAndGlyphs" text-anchor="middle" stroke="#111" stroke-width="0.25">22</text>
<text x="523" y="353.5" font-size="13.4" fill="#111" font-family="Liberation Sans" textLength="12.8" lengthAdjust="spacingAndGlyphs" text-anchor="middle" stroke="#111" stroke-width="0.25">23</text>
<text x="29.4" y="373.5" font-size="13.4" fill="#111" font-family="Liberation Sans" textLength="105" lengthAdjust="spacingAndGlyphs" stroke="#111" stroke-width="0.25">Гречневая крупа</text>
<text x="326" y="373.5" font-size="13.4" fill="#111" font-family="Liberation Sans" textLength="12.8" lengthAdjust="spacingAndGlyphs" text-anchor="middle" stroke="#111" stroke-width="0.25">34</text>
<text x="523" y="373.5" font-size="13.4" fill="#111" font-family="Liberation Sans" textLength="12.8" lengthAdjust="spacingAndGlyphs" text-anchor="middle" stroke="#111" stroke-width="0.25">39</text>
<rect x="28" y="400" width="396" height="178" fill="#fff" shape-rendering="crispEdges" />
<path d="M27.5,399.5 h397 v178 h-397 z" fill="none" stroke="#8c8c8c" stroke-width="1.2" />
<text x="153" y="427.3" font-size="18" fill="#595959" font-family="Liberation Sans" textLength="145" lengthAdjust="spacingAndGlyphs" >Цены на продукты</text>
<rect x="92" y="518" width="318" height="1" fill="#d9d9d9" shape-rendering="crispEdges" />
<text x="80.8" y="521.8" font-size="11.5" fill="#595959" font-family="Liberation Sans" textLength="6.0" lengthAdjust="spacingAndGlyphs" text-anchor="end" >0</text>
<rect x="92" y="501" width="318" height="1" fill="#d9d9d9" shape-rendering="crispEdges" />
<text x="80.8" y="504.8" font-size="11.5" fill="#595959" font-family="Liberation Sans" textLength="18.0" lengthAdjust="spacingAndGlyphs" text-anchor="end" >100</text>
<rect x="92" y="483" width="318" height="1" fill="#d9d9d9" shape-rendering="crispEdges" />
<text x="80.8" y="486.8" font-size="11.5" fill="#595959" font-family="Liberation Sans" textLength="18.0" lengthAdjust="spacingAndGlyphs" text-anchor="end" >200</text>
<rect x="92" y="466" width="318" height="1" fill="#d9d9d9" shape-rendering="crispEdges" />
<text x="80.8" y="469.8" font-size="11.5" fill="#595959" font-family="Liberation Sans" textLength="18.0" lengthAdjust="spacingAndGlyphs" text-anchor="end" >300</text>
<rect x="92" y="448" width="318" height="1" fill="#d9d9d9" shape-rendering="crispEdges" />
<text x="80.8" y="451.8" font-size="11.5" fill="#595959" font-family="Liberation Sans" textLength="18.0" lengthAdjust="spacingAndGlyphs" text-anchor="end" >400</text>
<rect x="108" y="515" width="14" height="3" fill="#4f81bd" shape-rendering="crispEdges" />
<text x="114.715" y="506" font-size="11.5" fill="#595959" font-family="Liberation Sans" textLength="12.0" lengthAdjust="spacingAndGlyphs" text-anchor="middle" >20</text>
<text x="114.715" y="537" font-size="11.5" fill="#595959" font-family="Liberation Sans" textLength="6.0" lengthAdjust="spacingAndGlyphs" text-anchor="middle" >1</text>
<rect x="153" y="512" width="14" height="6" fill="#4f81bd" shape-rendering="crispEdges" />
<text x="160.14499999999998" y="503" font-size="11.5" fill="#595959" font-family="Liberation Sans" textLength="12.0" lengthAdjust="spacingAndGlyphs" text-anchor="middle" >35</text>
<text x="160.14499999999998" y="537" font-size="11.5" fill="#595959" font-family="Liberation Sans" textLength="6.0" lengthAdjust="spacingAndGlyphs" text-anchor="middle" >2</text>
<rect x="199" y="497" width="14" height="21" fill="#4f81bd" shape-rendering="crispEdges" />
<text x="205.575" y="488" font-size="11.5" fill="#595959" font-family="Liberation Sans" textLength="18.0" lengthAdjust="spacingAndGlyphs" text-anchor="middle" >120</text>
<text x="205.575" y="537" font-size="11.5" fill="#595959" font-family="Liberation Sans" textLength="6.0" lengthAdjust="spacingAndGlyphs" text-anchor="middle" >3</text>
<rect x="244" y="466" width="14" height="52" fill="#4f81bd" shape-rendering="crispEdges" />
<text x="251.005" y="457" font-size="11.5" fill="#595959" font-family="Liberation Sans" textLength="18.0" lengthAdjust="spacingAndGlyphs" text-anchor="middle" >300</text>
<text x="251.005" y="537" font-size="11.5" fill="#595959" font-family="Liberation Sans" textLength="6.0" lengthAdjust="spacingAndGlyphs" text-anchor="middle" >4</text>
<text x="296.435" y="508" font-size="11.5" fill="#595959" font-family="Liberation Sans" textLength="6.0" lengthAdjust="spacingAndGlyphs" text-anchor="middle" >7</text>
<text x="296.435" y="537" font-size="11.5" fill="#595959" font-family="Liberation Sans" textLength="6.0" lengthAdjust="spacingAndGlyphs" text-anchor="middle" >5</text>
<rect x="335" y="514" width="14" height="4" fill="#4f81bd" shape-rendering="crispEdges" />
<text x="341.865" y="505" font-size="11.5" fill="#595959" font-family="Liberation Sans" textLength="12.0" lengthAdjust="spacingAndGlyphs" text-anchor="middle" >22</text>
<text x="341.865" y="537" font-size="11.5" fill="#595959" font-family="Liberation Sans" textLength="6.0" lengthAdjust="spacingAndGlyphs" text-anchor="middle" >6</text>
<rect x="380" y="512" width="14" height="6" fill="#4f81bd" shape-rendering="crispEdges" />
<text x="387.295" y="503" font-size="11.5" fill="#595959" font-family="Liberation Sans" textLength="12.0" lengthAdjust="spacingAndGlyphs" text-anchor="middle" >34</text>
<text x="387.295" y="537" font-size="11.5" fill="#595959" font-family="Liberation Sans" textLength="6.0" lengthAdjust="spacingAndGlyphs" text-anchor="middle" >7</text>
<text x="213.2" y="558" font-size="11.6" fill="#595959" font-family="Liberation Sans" textLength="75.4" lengthAdjust="spacingAndGlyphs" >Название оси</text>
<text x="0" y="0" font-size="11.6" fill="#595959" font-family="Liberation Sans" textLength="93" lengthAdjust="spacingAndGlyphs" transform="translate(57,537) rotate(-90)">Цена на продукт</text>
<path d="M40.5,439.5 h20 v102 h-20 z" fill="none" stroke="#666" stroke-width="1" stroke-dasharray="2,2"/>
<circle cx="40.7" cy="440" r="2.7" fill="#a9d3f5" stroke="#3d8fd8" stroke-width="1"/>
<circle cx="61" cy="440" r="2.7" fill="#a9d3f5" stroke="#3d8fd8" stroke-width="1"/>
<circle cx="40.7" cy="541.8" r="2.7" fill="#a9d3f5" stroke="#3d8fd8" stroke-width="1"/>
<circle cx="61" cy="541.8" r="2.7" fill="#a9d3f5" stroke="#3d8fd8" stroke-width="1"/>
<defs><clipPath id="cl"><rect x="27" y="219" width="851" height="379"/></clipPath></defs><g clip-path="url(#cl)">
<circle cx="27" cy="399.5" r="4.6" fill="#fff" stroke="#8a8a8a" stroke-width="1.4"/>
<circle cx="27" cy="577.7" r="4.6" fill="#fff" stroke="#8a8a8a" stroke-width="1.4"/>
<circle cx="225.6" cy="399.5" r="4.6" fill="#fff" stroke="#8a8a8a" stroke-width="1.4"/>
<circle cx="225.6" cy="577.7" r="4.6" fill="#fff" stroke="#8a8a8a" stroke-width="1.4"/>
<circle cx="424.5" cy="399.5" r="4.6" fill="#fff" stroke="#8a8a8a" stroke-width="1.4"/>
<circle cx="424.5" cy="577.7" r="4.6" fill="#fff" stroke="#8a8a8a" stroke-width="1.4"/>
<circle cx="27" cy="488.6" r="4.6" fill="#fff" stroke="#8a8a8a" stroke-width="1.4"/>
<circle cx="424.5" cy="488.6" r="4.6" fill="#fff" stroke="#8a8a8a" stroke-width="1.4"/>
</g>
<defs><filter id="sh" x="-30%" y="-30%" width="160%" height="160%"><feGaussianBlur stdDeviation="1.6"/></filter></defs>
<path d="M49,424.5 C70,423 85.5,452 84,488 C82.5,528 71,558 54,557.5 C36,557 23,532 22.5,502 C22,468 31,426 49,424.5 M23,492 C22.5,500 23,510 25,517" fill="none" stroke="#8a8a8a" stroke-width="3.5" opacity="0.75" filter="url(#sh)" transform="translate(1.5,2)"/>
<path d="M49,424.5 C70,423 85.5,452 84,488 C82.5,528 71,558 54,557.5 C36,557 23,532 22.5,502 C22,468 31,426 49,424.5 M23,492 C22.5,500 23,510 25,517" fill="none" stroke="#f03c43" stroke-width="2.8" />
<rect x="1" y="599" width="899" height="28" fill="#e6e6e6" shape-rendering="crispEdges" />
<rect x="1" y="598" width="878" height="1" fill="#d4d4d4" shape-rendering="crispEdges" />
<rect x="1" y="599" width="101" height="1" fill="#a0a0a0" shape-rendering="crispEdges" />
<rect x="268" y="599" width="611" height="1" fill="#a0a0a0" shape-rendering="crispEdges" />
<path d="M32.5,609 v7 l-4.5,-3.5 z" fill="#c0c0c0" />
<path d="M57,609 v7 l4.5,-3.5 z" fill="#c0c0c0" />
<rect x="102" y="599" width="166" height="24" fill="#fff" shape-rendering="crispEdges" />
<rect x="101" y="599" width="1" height="25" fill="#a0a0a0" shape-rendering="crispEdges" />
<rect x="268" y="599" width="1" height="25" fill="#a0a0a0" shape-rendering="crispEdges" />
<rect x="102" y="622" width="167" height="2" fill="#1e6e40" shape-rendering="crispEdges" />
<text x="113.7" y="616.5" font-size="12" fill="#217346" font-family="Liberation Sans" textLength="143" lengthAdjust="spacingAndGlyphs" font-weight="bold" >Группа по умолчанию</text>
<circle cx="310.2" cy="612.9" r="7.6" fill="none" stroke="#777" stroke-width="1.1"/>
<path d="M305.5,613 h9.4 M310.2,608.3 v9.4" fill="none" stroke="#777" stroke-width="1.8" />
<rect x="540" y="608" width="2" height="2" fill="#b0b0b0" shape-rendering="crispEdges" />
<rect x="540" y="612" width="2" height="2" fill="#b0b0b0" shape-rendering="crispEdges" />
<rect x="540" y="616" width="2" height="2" fill="#b0b0b0" shape-rendering="crispEdges" />
<rect x="557" y="606" width="322" height="15" fill="#dedede" shape-rendering="crispEdges" />
<rect x="557" y="606" width="15" height="15" fill="#fff" shape-rendering="crispEdges" />
<path d="M557.5,606.5 h14 v14 h-14 z" fill="none" stroke="#ababab" stroke-width="1" />
<path d="M566.5,609.5 v8 l-4,-4 z" fill="#777" />
<rect x="572" y="606" width="255" height="15" fill="#fff" shape-rendering="crispEdges" />
<path d="M571.5,606.5 h255 v14 h-255 z" fill="none" stroke="#ababab" stroke-width="1" />
<rect x="864" y="606" width="15" height="15" fill="#fff" shape-rendering="crispEdges" />
<path d="M864.5,606.5 h14 v14 h-14 z" fill="none" stroke="#ababab" stroke-width="1" />
<path d="M870,609.5 v8 l4,-4 z" fill="#777" />
<rect x="1" y="627" width="899" height="1" fill="#d0d0d0" shape-rendering="crispEdges" />
<rect x="1" y="628" width="899" height="21" fill="#f1f1f1" shape-rendering="crispEdges" />
<text x="9.2" y="641" font-size="11.5" fill="#555" font-family="Liberation Sans" textLength="36.1" lengthAdjust="spacingAndGlyphs" >Готово</text>
<rect x="597" y="628" width="38" height="21" fill="#c6c6c6" shape-rendering="crispEdges" />
<path d="M609.5,631.5 h12 v12 h-12 z M609.5,635.5 h12 M609.5,639.5 h12 M613.5,631.5 v12 M617.5,631.5 v12" fill="none" stroke="#666" stroke-width="1" />
<path d="M647.5,631.5 h13 v12 h-13 z M649.5,633.5 h9 v8 h-9 z M651,635.5 h6 M651,637.5 h6 M651,639.5 h6" fill="none" stroke="#666" stroke-width="1" />
<path d="M685.5,631.5 h13 v12 h-13 z M685.5,638.5 h5 v-7 M694.5,631.5 v5" fill="none" stroke="#666" stroke-width="1" />
<rect x="715" y="638" width="8" height="1" fill="#555" shape-rendering="crispEdges" />
<rect x="715" y="637" width="8" height="2" fill="#555" shape-rendering="crispEdges" />
<rect x="726" y="637" width="100" height="1" fill="#a0a0a0" shape-rendering="crispEdges" />
<rect x="774" y="632" width="4" height="11" fill="#666" shape-rendering="crispEdges" />
<rect x="830" y="637" width="8" height="2" fill="#555" shape-rendering="crispEdges" />
<rect x="833" y="634" width="2" height="8" fill="#555" shape-rendering="crispEdges" />
<text x="854.1" y="640.8" font-size="11.5" fill="#555" font-family="Liberation Sans" textLength="26.5" lengthAdjust="spacingAndGlyphs" >100%</text>
<rect x="0" y="36" width="1" height="614" fill="#217346" shape-rendering="crispEdges" />
<rect x="900" y="36" width="1" height="614" fill="#217346" shape-rendering="crispEdges" />
<rect x="0" y="649" width="901" height="1" fill="#217346" shape-rendering="crispEdges" /></svg></body></html>
